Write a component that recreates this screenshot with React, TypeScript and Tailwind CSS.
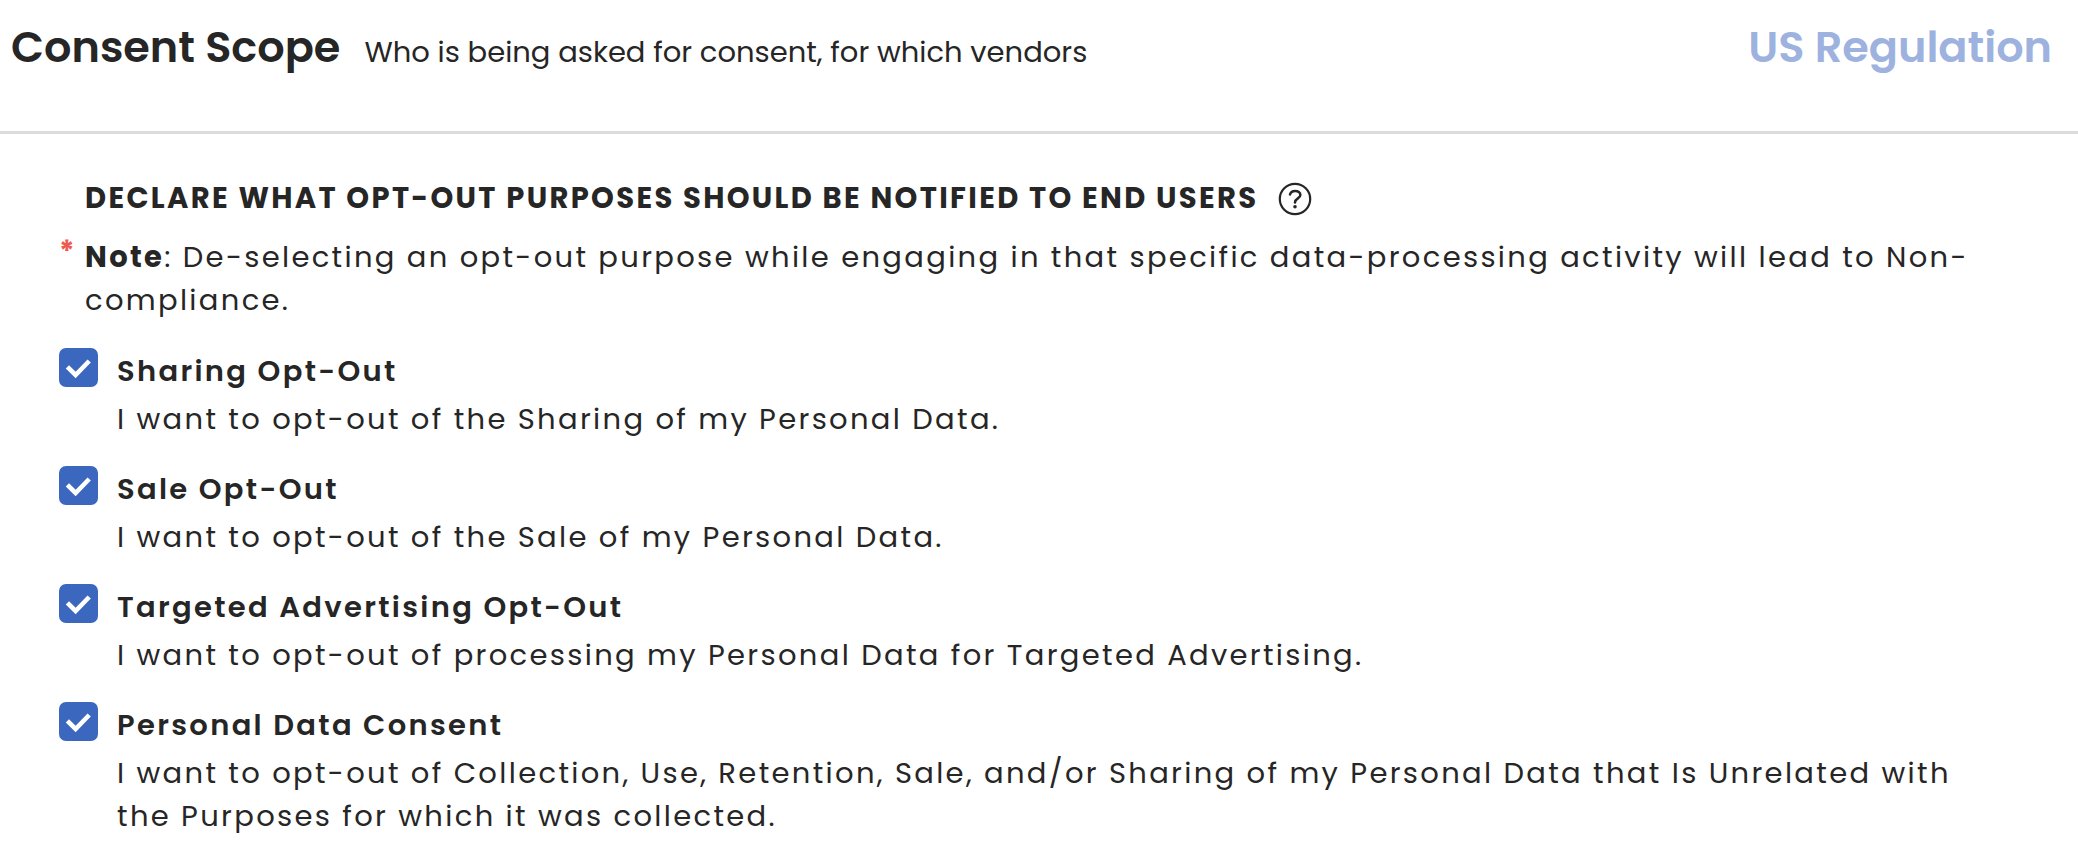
import { useState } from "react"

const purposes = [
  {
    id: "sharing",
    title: "Sharing Opt-Out",
    description: "I want to opt-out of the Sharing of my Personal Data.",
  },
  {
    id: "sale",
    title: "Sale Opt-Out",
    description: "I want to opt-out of the Sale of my Personal Data.",
  },
  {
    id: "advertising",
    title: "Targeted Advertising Opt-Out",
    description: "I want to opt-out of processing my Personal Data for Targeted Advertising.",
  },
  {
    id: "consent",
    title: "Personal Data Consent",
    description:
      "I want to opt-out of Collection, Use, Retention, Sale, and/or Sharing of my Personal Data that Is Unrelated with the Purposes for which it was collected.",
  },
]

function HelpIcon() {
  return (
    <svg viewBox="0 0 34 34" className="h-[34px] w-[34px]" fill="none" stroke="currentColor" aria-hidden="true">
      <circle cx="17" cy="17" r="15.2" strokeWidth="2.2" />
      <path d="M12 12.6C12.5 10 14.6 8.9 17.1 8.9c2.9 0 5.3 1.5 5.3 4.2 0 3.4-5.4 3.2-5.4 7.3" strokeWidth="2.5" strokeLinecap="round" />
      <circle cx="17" cy="24.8" r="1.8" fill="currentColor" stroke="none" />
    </svg>
  )
}

type PurposeProps = {
  id: string
  title: string
  description: string
}

function Purpose({ id, title, description }: PurposeProps) {
  const [checked, setChecked] = useState(true)

  return (
    <li className="flex items-start gap-[19px]">
      <span className="relative block h-[39px] w-[39px] shrink-0">
        <input
          id={id}
          type="checkbox"
          checked={checked}
          onChange={(e) => setChecked(e.target.checked)}
          aria-describedby={`${id}-description`}
          className="block h-full w-full appearance-none rounded-[7px] border-2 border-[#3b67bf] checked:bg-[#3b67bf]"
        />
        {checked && (
          <svg viewBox="0 0 39 39" className="pointer-events-none absolute inset-0 h-full w-full" fill="none" stroke="white" aria-hidden="true">
            <path d="M8.4 18.8l8.2 8.2L30.2 13" strokeWidth="4.6" />
          </svg>
        )}
      </span>
      <div className="flex-1 space-y-[5px] pt-0.5">
        <label htmlFor={id} className="block font-semibold">
          {title}
        </label>
        <p id={`${id}-description`}>{description}</p>
      </div>
    </li>
  )
}

export default function App() {
  return (
    <div className="min-h-screen bg-white font-['Poppins','Inter',sans-serif] text-[#262626]">
      <header className="flex items-baseline justify-between border-b-3 border-[#dcdcdc] pt-[15px] pr-[26px] pb-[47px] pl-[11px] leading-[64px]">
        <div className="flex items-baseline gap-6">
          <h1 className="text-[43px] font-semibold">Consent Scope</h1>
          <p className="text-[29px]">Who is being asked for consent, for which vendors</p>
        </div>
        <span className="text-[43px] font-semibold text-[#9db2df]">US Regulation</span>
      </header>

      <main className="pt-[43px] pr-20 pb-2 pl-[59px] text-[29px] leading-[43px] tracking-[0.08em]">
        <div className="flex items-center gap-5 pl-[26px]">
          <h2 className="font-bold uppercase">Declare what opt-out purposes should be notified to end users</h2>
          <button type="button" aria-label="Help">
            <HelpIcon />
          </button>
        </div>

        <div className="mt-4 flex">
          <span className="w-[26px] shrink-0 leading-8 font-bold text-[#ee5a52]">*</span>
          <p>
            <strong className="font-bold">Note</strong>: De-selecting an opt-out purpose while engaging in that specific
            data-processing activity will lead to Non-compliance.
          </p>
        </div>

        <ul className="mt-[26px] space-y-[25px]">
          {purposes.map((purpose) => (
            <Purpose key={purpose.id} {...purpose} />
          ))}
        </ul>
      </main>
    </div>
  )
}
